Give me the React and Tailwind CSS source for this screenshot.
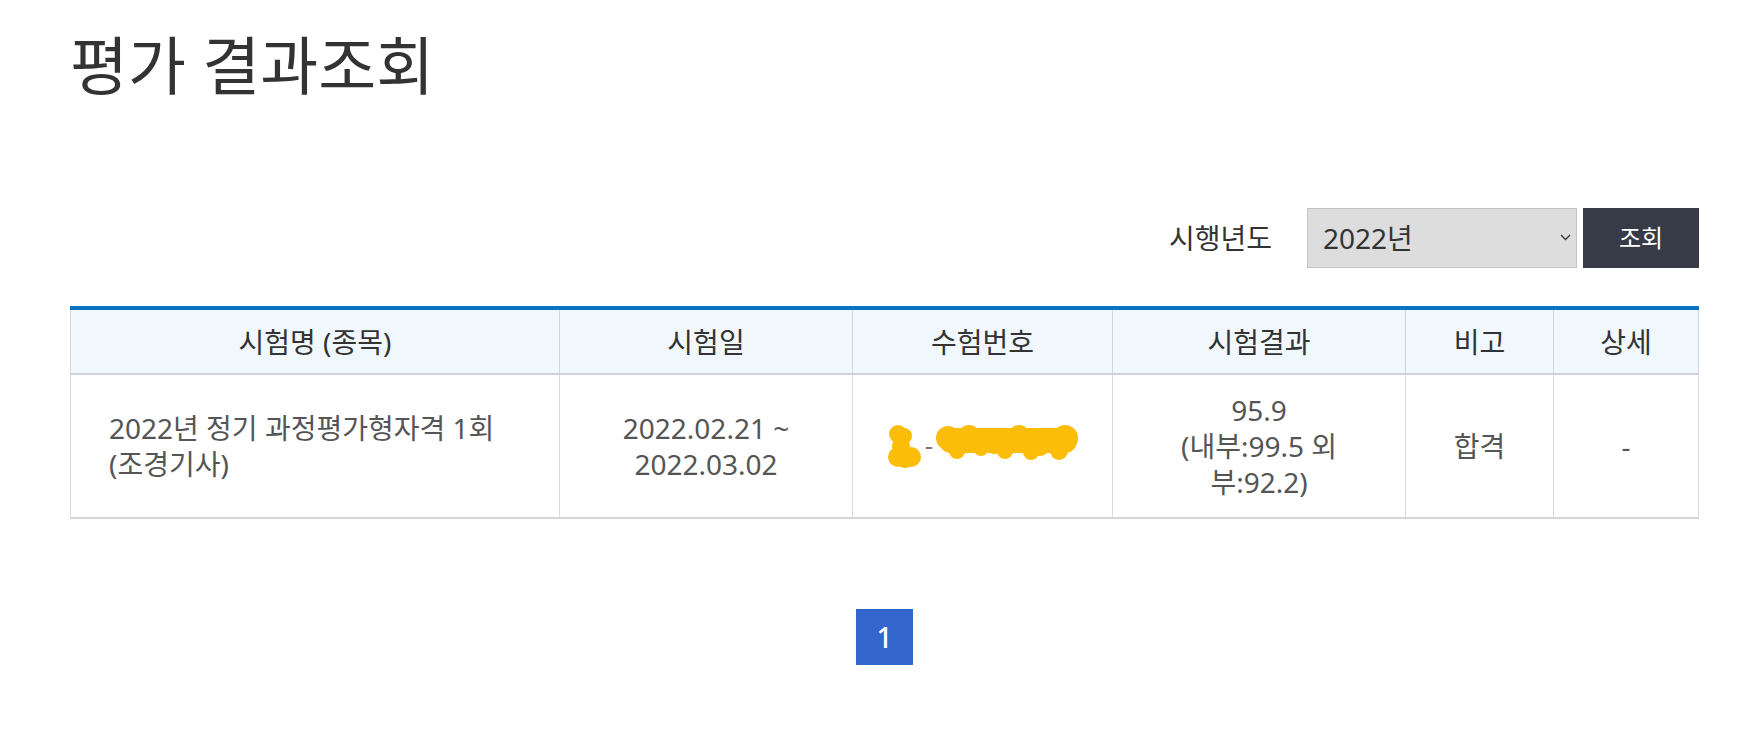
import React from "react";

const FONT = "font-['Noto_Sans','Noto_Sans_CJK_KR',sans-serif]";

function Lines({ lines }) {
  return (
    <div>
      {lines.map((l, i) => (
        <React.Fragment key={i}>
          {i > 0 && <br />}
          {l}
        </React.Fragment>
      ))}
    </div>
  );
}

const Y = "#fbbd08";

function Redacted() {
  return (
    <div className="flex items-center h-[44px]">
      <svg width="39" height="44" viewBox="0 0 39 44">
        <g fill={Y}>
          <circle cx="14" cy="10" r="9" />
          <circle cx="20" cy="12" r="8" />
          <circle cx="17" cy="22" r="9" />
          <circle cx="14" cy="33" r="10" />
          <circle cx="27" cy="33" r="10" />
          <circle cx="21" cy="36" r="8" />
        </g>
      </svg>
      <span className="text-[#777] text-[26px] leading-none -mt-[2px] w-[12px] text-center">-</span>
      <svg width="146" height="44" viewBox="0 0 146 44">
        <g fill={Y}>
          <rect x="4" y="4" width="138" height="25" rx="12" />
          <circle cx="13" cy="14" r="12" />
          <circle cx="34" cy="12" r="11" />
          <circle cx="60" cy="18" r="12" />
          <circle cx="84" cy="12" r="11" />
          <circle cx="104" cy="20" r="12" />
          <circle cx="130" cy="14" r="13" />
          <circle cx="22" cy="27" r="8" />
          <circle cx="46" cy="25" r="7" />
          <circle cx="70" cy="27" r="8" />
          <circle cx="96" cy="28" r="8" />
          <circle cx="124" cy="27" r="9" />
        </g>
      </svg>
    </div>
  );
}

export default function App() {
  const cols = "grid grid-cols-[489px_293px_260px_293px_148px_146px]";
  const headers = ["시험명 (종목)", "시험일", "수험번호", "시험결과", "비고", "상세"];
  return (
    <div className={`${FONT} w-full min-h-[748px] bg-white pl-[70px] pr-[40px]`}>
      <h1 className="text-[63px] leading-[80px] text-[#333] font-normal pt-[25px]">평가 결과조회</h1>

      <div className="mt-[103px] flex items-center justify-end h-[60px]">
        <span className="text-[28px] text-[#333] mr-[35px]">시행년도</span>
        <div className="relative w-[270px] h-[60px]">
          <select
            defaultValue="2022"
            className={`${FONT} appearance-none w-full h-full bg-[#dddddd] border border-[#c4c4c4] pl-[15px] text-[28px] text-[#333] outline-none`}
          >
            <option value="2022">2022년</option>
            <option value="2021">2021년</option>
          </select>
          <svg className="absolute right-[6px] top-[26px] pointer-events-none" width="11" height="7" viewBox="0 0 11 7">
            <path d="M1 1 L5.5 5.5 L10 1" fill="none" stroke="#333" strokeWidth="1.3" />
          </svg>
        </div>
        <button className="ml-[6px] w-[116px] h-[60px] bg-[#373b48] text-white text-[24px]">조회</button>
      </div>

      <div className="mt-[38px] border-t-4 border-[#0a72c3]">
        <div className={`${cols} bg-[#f0f7fd] border-b-2 border-[#cbd2db] text-[28px] text-[#333]`}>
          {headers.map((h, i) => (
            <div
              key={h}
              className={`h-[63px] flex items-center justify-center border-l border-[#cfd6df] ${i === 5 ? "border-r" : ""}`}
            >
              <span>{h}</span>
            </div>
          ))}
        </div>
        <div className={`${cols} border-b-2 border-[#d6d6d6] text-[28px] leading-[36px] text-[#555]`}>
          <div className="h-[142px] flex items-center pl-[38px] border-l border-[#dadada]">
            <Lines lines={["2022년 정기 과정평가형자격 1회", "(조경기사)"]} />
          </div>
          <div className="flex items-center justify-center text-center border-l border-[#dadada]">
            <Lines lines={["2022.02.21 ~", "2022.03.02"]} />
          </div>
          <div className="flex items-center justify-center border-l border-[#dadada]">
            <Redacted />
          </div>
          <div className="flex items-center justify-center text-center border-l border-[#dadada]">
            <Lines lines={["95.9", "(내부:99.5 외", "부:92.2)"]} />
          </div>
          <div className="flex items-center justify-center border-l border-[#dadada]">
            <span>합격</span>
          </div>
          <div className="flex items-center justify-center border-l border-r border-[#dadada]">
            <span>-</span>
          </div>
        </div>
      </div>

      <div className="mt-[90px] flex justify-center">
        <div className="w-[57px] h-[56px] bg-[#3366cc] text-white text-[28px] font-medium flex items-center justify-center">
          1
        </div>
      </div>
    </div>
  );
}
